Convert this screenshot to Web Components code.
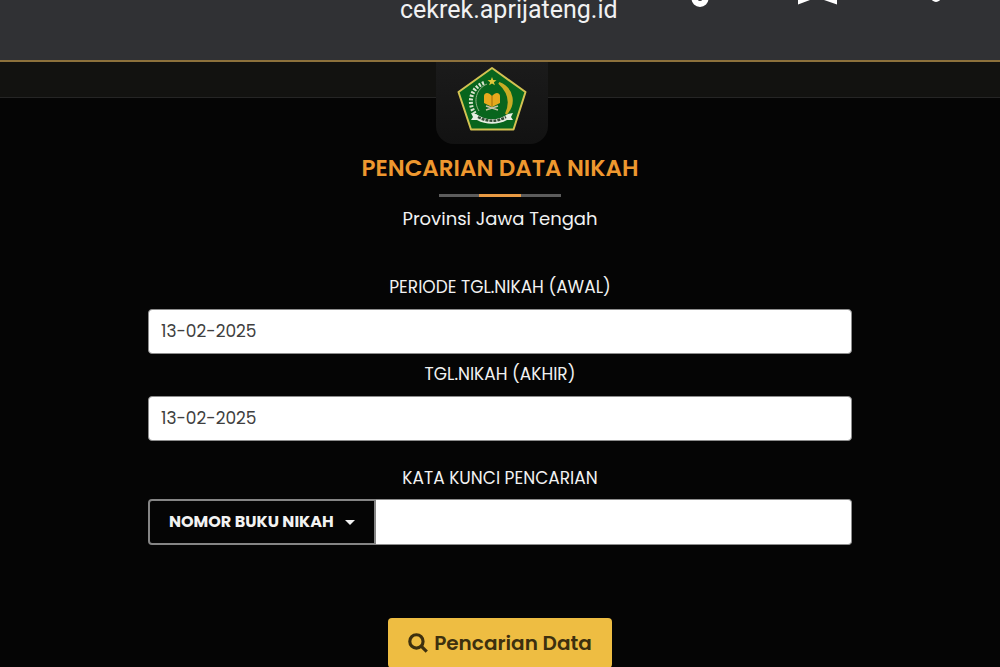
<!DOCTYPE html>
<html lang="id">
<head>
<meta charset="utf-8">
<title>Pencarian Data Nikah</title>
<style>
html, body { height: 100%; }
body { margin: 0; background: #050505; color: #f2f2f2; font-family: Poppins, Lato, "Open Sans", sans-serif; overflow: hidden; }
</style>
</head>
<body>
<nikah-page></nikah-page>
<script>
const define = (name, html, setup) => {
  const template = document.createElement('template');
  template.innerHTML = html;
  customElements.define(name, class extends HTMLElement {
    constructor() {
      super();
      this.attachShadow({ mode: 'open' }).append(template.content.cloneNode(true));
    }
    connectedCallback() { if (setup) setup(this, this.shadowRoot); }
  });
};

define('browser-bar', `
<style>
:host { display: grid; grid-template-columns: 40% 1fr auto; height: 60px; background: #303134; border-bottom: 2px solid #8d713c; font-family: Roboto, sans-serif; }
.url { grid-column: 2; font-size: 25px; line-height: 20px; color: #f1f1f2; }
.icons { display: flex; gap: 78px; padding-right: 44px; }
svg { display: block; width: 40px; height: 10px; fill: #fff; }
</style>
<span class="url">cekrek.aprijateng.id</span>
<div class="icons">
  <svg viewBox="0 0 40 10"><circle cx="20" cy="-1.500" r="5.500" fill="none" stroke="#fff" stroke-width="6"/></svg>
  <svg viewBox="0 0 40 10"><path d="M0-1V4.500L12 0V-1ZM39-1V4.500L26 0V-1Z"/></svg>
  <svg viewBox="0 0 40 10"><circle cx="20" cy="-3" r="5"/></svg>
</div>`);

define('kemenag-logo', `
<style>:host { display: block; } svg { display: block; width: 70px; height: 65px; }</style>
<svg viewBox="0 0 70 65" role="img" aria-label="Logo">
  <path d="M35 2 68.500 26 56.500 63.500H14L1.500 26Z" fill="#08651d" stroke="#d3c252" stroke-width="2" stroke-linejoin="round"/>
  <path d="M27 17C13 22 10 39 19 49" fill="none" stroke="#d9e5cf" stroke-width="4" stroke-dasharray="2 1.500"/>
  <path d="M30 18C19 23 16 35 22 45" fill="none" stroke="#91b184" stroke-width="1"/>
  <path d="M42 17C57 23 58 39 49 48C54 37 52 26 42 17Z" fill="#c9ac24" stroke="#c9ac24" stroke-width="2"/>
  <path d="m35 11 1.200 3 3.300.2-2.600 2 1 3.100-2.900-1.800-2.900 1.800 1-3.100-2.600-2 3.300-.2Z" fill="#e0c83b"/>
  <path d="M35 30C31 25 27 27 27 30V37L35 41 43 37V30C43 27 39 25 35 30Z" fill="#e7a91d"/>
  <path d="M35 30V40" stroke="#a56c0a" stroke-width="1"/>
  <path d="m29 40 12 4M41 40l-12 4" stroke="#c8c2a6" stroke-width="1.500"/>
  <path d="M14 47 19 48C29 55 41 55 51 48L56 47 54 51 56 54 50 54C41 59 29 59 20 54L14 54 16 51Z" fill="#e8eee3"/>
  <path d="M21 51C30 56 40 56 49 51" fill="none" stroke="#344c35" stroke-width="2.500" stroke-dasharray="3 1"/>
</svg>`);

define('site-header', `
<style>
:host { display: flex; justify-content: center; height: 35px; padding-right: 16px; background: #121210; border-bottom: 1px solid #252525; }
.plate { display: flex; justify-content: center; box-sizing: border-box; width: 112px; height: 82px; padding-top: 4px; border-radius: 0 0 18px 18px; background: linear-gradient(#1b1b1b, #121212); }
</style>
<div class="plate"><kemenag-logo></kemenag-logo></div>`);

define('page-heading', `
<style>
:host { display: block; padding-top: 56px; text-align: center; }
h1 { margin: 0; font-size: 23px; line-height: 28px; font-weight: 600; color: #ee982f; }
.rule { width: 122px; height: 3px; margin: 12px auto 10px; background: linear-gradient(90deg, #5c5c5c 33%, #e99a43 33% 67%, #5c5c5c 67%); }
p { margin: 0; font-size: 18px; line-height: 24px; }
</style>
<h1><slot></slot></h1><div class="rule"></div><p><slot name="subtitle"></slot></p>`);

define('form-field', `
<style>
:host { display: block; }
label { display: block; text-align: center; font-size: 17px; line-height: 24px; margin-bottom: 10px; }
input { display: block; box-sizing: border-box; width: 100%; height: 45px; padding: 0 12px 2px; border: 1px solid #8d8d8d; border-radius: 4px; background: #fff; color: #404040; font: inherit; font-size: 17px; }
</style>
<label for="value"></label><input id="value" type="text">`, (host, root) => {
  root.querySelector('label').textContent = host.getAttribute('label');
  root.querySelector('input').value = host.getAttribute('value');
});

define('keyword-field', `
<style>
:host { display: block; }
label { display: block; text-align: center; font-size: 17px; line-height: 24px; margin-bottom: 9px; }
.group { display: flex; height: 46px; }
.kind { display: grid; align-items: center; width: 228px; }
select, svg { grid-area: 1 / 1; }
select { appearance: none; box-sizing: border-box; width: 100%; height: 100%; padding: 0 19px 2px; border: 2px solid #858585; border-radius: 4px 0 0 4px; background: #050505; color: #f2f2f2; font: inherit; font-size: 16px; font-weight: 700; }
svg { justify-self: end; width: 10px; height: 5px; margin-right: 21px; fill: #f2f2f2; pointer-events: none; z-index: 1; }
input { box-sizing: border-box; flex: 1; min-width: 0; padding: 0 12px; border: 1px solid #8d8d8d; border-left: 0; border-radius: 0 4px 4px 0; background: #fff; font: inherit; font-size: 17px; }
</style>
<label for="keyword">KATA KUNCI PENCARIAN</label>
<div class="group">
  <div class="kind"><select aria-label="Jenis kata kunci"><option>NOMOR BUKU NIKAH</option></select><svg viewBox="0 0 10 5"><path d="M0 0H10L5 5Z"/></svg></div>
  <input id="keyword" type="text">
</div>`);

define('search-button', `
<style>
:host { display: flex; justify-content: center; }
button { display: flex; align-items: center; justify-content: center; gap: 6px; box-sizing: border-box; height: 50px; padding: 0 20px; border: 0; border-radius: 4px; background: #eebd42; color: #3d300f; font: inherit; font-size: 20px; font-weight: 600; }
svg { width: 20px; height: 20px; fill: none; stroke: currentColor; stroke-width: 3; }
</style>
<button type="button"><svg viewBox="0 0 19 19"><circle cx="8" cy="8" r="6.300"/><path d="m12.500 12.500 5.300 5.300"/></svg><slot></slot></button>`);

define('nikah-page', `
<style>
:host { display: block; }
form { display: flex; flex-direction: column; padding: 0 148px; margin-top: 44px; }
form-field + form-field { margin-top: 8px; }
keyword-field { margin-top: 25px; }
search-button { margin-top: 73px; }
</style>
<browser-bar></browser-bar>
<site-header></site-header>
<main>
  <page-heading>PENCARIAN DATA NIKAH<span slot="subtitle">Provinsi Jawa Tengah</span></page-heading>
  <form>
    <form-field label="PERIODE TGL.NIKAH (AWAL)" value="13-02-2025"></form-field>
    <form-field label="TGL.NIKAH (AKHIR)" value="13-02-2025"></form-field>
    <keyword-field></keyword-field>
    <search-button>Pencarian Data</search-button>
  </form>
</main>`);
</script>
</body>
</html>
